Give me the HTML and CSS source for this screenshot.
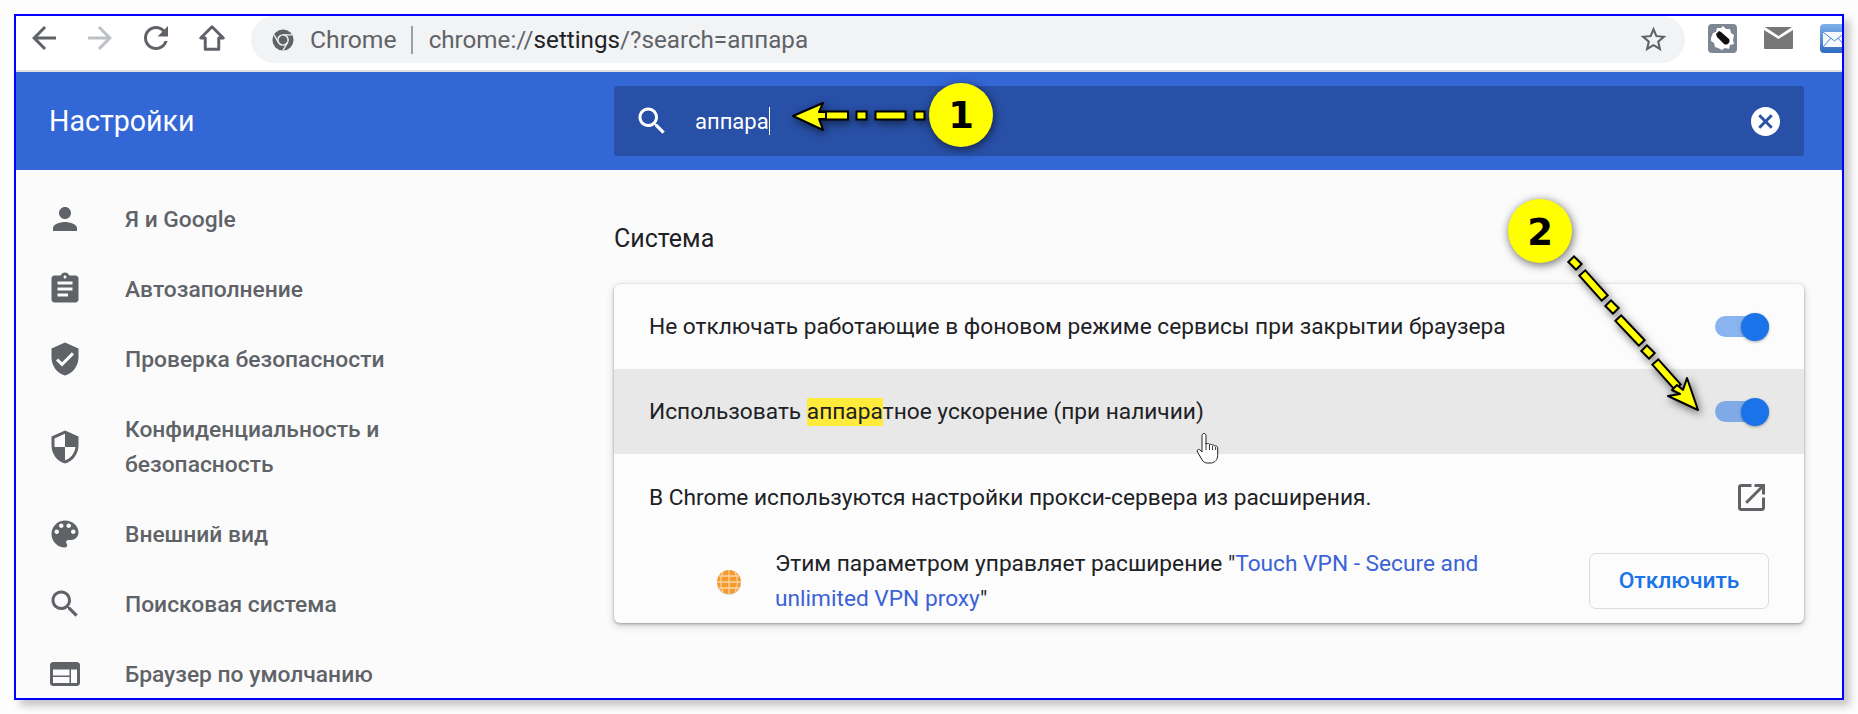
FILE: index.html
```html
<!DOCTYPE html>
<html lang="ru">

<head>
    <meta charset="UTF-8">
    <title>Настройки</title>
    <link rel="stylesheet" href="styles.css">
</head>

<body>
    <div class="frame">
        <!-- browser toolbar -->
        <div class="toolbar">
            <button class="nav-btn"><svg class="ico" viewBox="0 0 24 24"><path d="M20 11H7.83l5.59-5.59L12 4l-8 8 8 8 1.41-1.41L7.83 13H20v-2z"/></svg></button>
            <button class="nav-btn nav-off"><svg class="ico" viewBox="0 0 24 24"><path d="M12 4l-1.41 1.41L16.17 11H4v2h12.17l-5.58 5.59L12 20l8-8z"/></svg></button>
            <button class="nav-btn"><svg class="ico" viewBox="0 0 24 24"><path d="M17.65 6.35C16.2 4.9 14.21 4 12 4c-4.42 0-7.99 3.58-7.99 8s3.57 8 7.99 8c3.73 0 6.84-2.55 7.73-6h-2.08c-.82 2.33-3.04 4-5.65 4-3.31 0-6-2.69-6-6s2.69-6 6-6c1.66 0 3.14.69 4.22 1.78L13 11h7V4l-2.35 2.35z"/></svg></button>
            <button class="nav-btn"><svg class="ico" viewBox="0 0 24 24"><path class="home-line" d="M12 4.500L4.500 12H7.500v7.500h9V12h3z"/></svg></button>
            <div class="omnibox">
                <svg class="chrome-ico" viewBox="0 0 24 24">
                    <circle cx="12" cy="12" r="11.5" fill="#5f6368"/>
                    <circle cx="12" cy="12" r="5.6" fill="#5f6368" stroke="#f1f3f4" stroke-width="1.6"/>
                    <path d="M12 6.4h10M7.2 15l-5-8.6M16.8 15l-5 8.6" stroke="#f1f3f4" stroke-width="1.4"/>
                </svg>
                <span class="site-name">Chrome</span>
                <span class="omni-sep"></span>
                <span class="url">chrome://<b>settings</b>/?search=аппара</span>
                <svg class="ico star" viewBox="0 0 24 24"><path d="M22 9.24l-7.19-.62L12 2 9.19 8.63 2 9.24l5.46 4.73L5.82 21 12 17.27 18.18 21l-1.63-7.03L22 9.24zM12 15.4l-3.76 2.27 1-4.28-3.32-2.88 4.38-.38L12 6.1l1.71 4.04 4.38.38-3.32 2.88 1 4.28L12 15.4z"/></svg>
            </div>
            <svg class="ext ext-bomb" viewBox="0 0 29 29">
                <rect width="29" height="29" rx="4" fill="#7d8793"/>
                <path d="M3 14l2-5 3-1 1-4 4 0 2-2 3 3 4 0 1 4 3 2-1 5 1 4-4 1-1 4-4-1-3 2-4-2-3-1-1-4-3-2z" fill="#fff"/>
                <path d="M8 10l3-3 2 1 8 7c2 3-2 7-5 5l-7-7z" fill="#111"/>
            </svg>
            <svg class="ext ext-mail" viewBox="0 0 29 22">
                <path d="M1 0h27l-13.500 9z" fill="#777"/>
                <path d="M0 3l14.500 9L29 3v18a1 1 0 0 1-1 1H1a1 1 0 0 1-1-1z" fill="#777"/>
            </svg>
            <svg class="ext ext-letter" viewBox="0 0 29 29">
                <defs>
                    <linearGradient id="letterBg" x1="0" y1="0" x2="0" y2="1">
                        <stop offset="0" stop-color="#7fb0ea"/>
                        <stop offset="1" stop-color="#2f6cc0"/>
                    </linearGradient>
                </defs>
                <rect width="29" height="29" rx="4" fill="url(#letterBg)"/>
                <rect x="3" y="8" width="23" height="15" fill="#f4f8fd"/>
                <path d="M3 8l11.500 9L26 8M3 23l8-9M26 23l-8-9" fill="none" stroke="#4a86d2" stroke-width="1"/>
            </svg>
        </div>

        <!-- settings header -->
        <div class="header">
            <div class="title">Настройки</div>
            <div class="search">
                <svg class="search-ico" viewBox="0 0 24 24"><path d="M15.5 14h-.79l-.28-.27C15.41 12.59 16 11.11 16 9.5 16 5.91 13.09 3 9.5 3S3 5.91 3 9.5 5.91 16 9.5 16c1.61 0 3.09-.59 4.23-1.57l.27.28v.79l5 4.99L20.49 19l-4.99-5zm-6 0C7.01 14 5 11.99 5 9.5S7.01 5 9.5 5 14 7.01 14 9.5 11.99 14 9.5 14z"/></svg>
                <span class="search-text">аппара</span>
                <span class="caret"></span>
                <svg class="clear-ico" viewBox="2 2 20 20"><path d="M12 2C6.47 2 2 6.470 2 12s4.470 10 10 10 10-4.470 10-10S17.530 2 12 2zm5 13.590L15.590 17 12 13.410 8.410 17 7 15.590 10.590 12 7 8.410 8.410 7 12 10.590 15.590 7 17 8.410 13.410 12 17 15.590z"/></svg>
            </div>
        </div>

        <div class="content">
            <!-- left menu -->
            <div class="sidebar">
                <div class="menu-item"><svg class="ico" viewBox="0 0 24 24"><path d="M12 12c2.210 0 4-1.790 4-4s-1.790-4-4-4-4 1.790-4 4 1.790 4 4 4zm0 2c-2.670 0-8 1.340-8 4v2h16v-2c0-2.660-5.330-4-8-4z"/></svg><span>Я и Google</span></div>
                <div class="menu-item"><svg class="ico" viewBox="0 0 24 24"><path d="M19 3h-4.180C14.400 1.840 13.300 1 12 1c-1.300 0-2.400.84-2.820 2H5c-1.100 0-2 .9-2 2v14c0 1.100.9 2 2 2h14c1.100 0 2-.9 2-2V5c0-1.100-.9-2-2-2zm-7 0c.55 0 1 .45 1 1s-.45 1-1 1-1-.45-1-1 .45-1 1-1zm2 14H7v-2h7v2zm3-4H7v-2h10v2zm0-4H7V7h10v2z"/></svg><span>Автозаполнение</span></div>
                <div class="menu-item"><svg class="ico" viewBox="0 0 24 24"><path d="M12 1L3 5v6c0 5.550 3.840 10.740 9 12 5.160-1.260 9-6.450 9-12V5l-9-4zm-2 16l-4-4 1.410-1.410L10 14.170l6.590-6.590L18 9l-8 8z"/></svg><span>Проверка безопасности</span></div>
                <div class="menu-item"><svg class="ico" viewBox="0 0 24 24"><path d="M12 1L3 5v6c0 5.550 3.840 10.740 9 12 5.160-1.260 9-6.450 9-12V5l-9-4zm0 10.990h7c-.53 4.120-3.280 7.790-7 8.940V12H5V6.300l7-3.110v8.800z"/></svg><span>Конфиденциальность и безопасность</span></div>
                <div class="menu-item"><svg class="ico" viewBox="0 0 24 24"><path d="M12 3c-4.970 0-9 4.030-9 9s4.030 9 9 9c.83 0 1.500-.67 1.500-1.500 0-.39-.15-.74-.39-1.010-.23-.26-.38-.61-.38-.99 0-.83.67-1.500 1.500-1.500H16c2.760 0 5-2.240 5-5 0-4.420-4.030-8-9-8zm-5.500 9c-.83 0-1.500-.67-1.500-1.500S5.670 9 6.500 9 8 9.670 8 10.500 7.330 12 6.500 12zm3-4C8.670 8 8 7.330 8 6.500S8.670 5 9.500 5s1.500.67 1.500 1.500S10.330 8 9.500 8zm5 0c-.83 0-1.500-.67-1.500-1.500S13.670 5 14.500 5s1.500.67 1.500 1.500S15.330 8 14.500 8zm3 4c-.83 0-1.500-.67-1.500-1.500S16.670 9 17.500 9s1.500.67 1.500 1.500-.67 1.500-1.500 1.500z"/></svg><span>Внешний вид</span></div>
                <div class="menu-item"><svg class="ico" viewBox="0 0 24 24"><path d="M15.500 14h-.79l-.28-.27C15.410 12.590 16 11.110 16 9.500 16 5.910 13.090 3 9.500 3S3 5.910 3 9.500 5.910 16 9.500 16c1.610 0 3.090-.59 4.230-1.570l.27.28v.79l5 4.990L20.490 19l-4.990-5zm-6 0C7.010 14 5 11.990 5 9.500S7.010 5 9.500 5 14 7.010 14 9.500 11.990 14 9.500 14z"/></svg><span>Поисковая система</span></div>
                <div class="menu-item"><svg class="ico" viewBox="0 0 24 24"><path d="M20 4H4c-1.100 0-1.990.9-1.990 2L2 18c0 1.100.9 2 2 2h16c1.100 0 2-.9 2-2V6c0-1.100-.9-2-2-2zm-5 14H4v-4h11v4zm0-5H4V9h11v4zm5 5h-4V9h4v9z"/></svg><span>Браузер по умолчанию</span></div>
            </div>

            <!-- system section -->
            <div class="main">
                <h2 class="section-title">Система</h2>
                <div class="card">
                    <div class="row">
                        <span>Не отключать работающие в фоновом режиме сервисы при закрытии браузера</span>
                        <span class="toggle"></span>
                    </div>
                    <div class="row row-hover">
                        <span>Использовать <mark class="hit">аппара</mark>тное ускорение (при наличии)</span>
                        <span class="toggle"></span>
                    </div>
                    <div class="row row-proxy">
                        <span>В Chrome используются настройки прокси-сервера из расширения.</span>
                        <svg class="ico open-ico" viewBox="3 3 18 18"><path d="M19 19H5V5h7V3H5c-1.110 0-2 .9-2 2v14c0 1.100.89 2 2 2h14c1.100 0 2-.9 2-2v-7h-2v7zM14 3v2h3.590l-9.830 9.830 1.410 1.410L19 6.410V10h2V3h-7z"/></svg>
                    </div>
                    <div class="ext-row">
                        <svg class="globe" viewBox="0 0 28 28">
                            <circle cx="14" cy="15" r="12" fill="#ddd"/>
                            <circle cx="14" cy="14" r="12" fill="#f59a2e"/>
                            <path d="M2 14h24M4 8h20M4 20h20M14 2v24M8 4c-3 6-3 14 0 20M20 4c3 6 3 14 0 20" fill="none" stroke="#fbd6a4" stroke-width="1.300"/>
                        </svg>
                        <p class="ext-text">Этим параметром управляет расширение "<a href="#">Touch VPN - Secure and unlimited VPN proxy</a>"</p>
                        <button class="off-btn">Отключить</button>
                    </div>
                </div>
            </div>
        </div>
    </div>

    <!-- hand drawn marks on top of the screenshot -->
    <svg class="marks" viewBox="0 0 1858 714">
        <g class="arrow">
            <path class="arrow-line" d="M820 115.500H844M860.500 115.500H862.500M879.500 115.500H901.500M918.500 115.500H920.500M1574 262l2 2M1585 276l17 19M1611 306l2 2M1621 321l18 19M1647 351l2 2M1658 365l17 19"/>
            <path class="arrow-fill" d="M820 115.500H844M860.500 115.500H862.500M879.500 115.500H901.500M918.500 115.500H920.500M1574 262l2 2M1585 276l17 19M1611 306l2 2M1621 321l18 19M1647 351l2 2M1658 365l17 19"/>
            <path class="arrow-head" d="M793 116L823 103L819 112H826V119H819L823 130Z"/>
            <path class="arrow-head" d="M1698 410L1687 378L1683 390L1677 385L1672 390L1680 394L1668 396Z"/>
        </g>
    </svg>
    <div class="pin pin-one">1</div>
    <div class="pin pin-two">2</div>
    <svg class="hand" viewBox="0 0 25 32">
        <path d="M8 1.500c1.300 0 2 1 2 2.200V12l1.500-.5c1.200-.2 1.800.4 2 1 1-.6 2.200-.3 2.600.6 1-.5 2.300-.1 2.600 1 1-.4 2.800 0 3 1.500v8c0 3.500-2.500 7-6.500 7.400h-4c-2.500 0-4-1.400-5-3L1.500 20c-1-1.600.6-3.300 2.300-2.300L6 20V3.700C6 2.500 6.800 1.500 8 1.500z" fill="#fff" stroke="#222" stroke-width="1"/>
        <path d="M10 11v7M13.500 12.500V18M16.500 14V18M19.600 15V18" stroke="#222" stroke-width=".9" fill="none"/>
    </svg>
</body>

</html>
```

FILE: styles.css
```css
/* Base */
html,
body {
    margin: 0;
    height: 100%;
    overflow: hidden;
}

body {
    position: relative;
    background-color: #fdfdfd;
    font-family: Roboto, "Liberation Sans", sans-serif;
    color: #202124;
}

.frame {
    margin: 14px;
    width: 1830px;
    height: 686px;
    box-sizing: border-box;
    border: 2px solid #0000ff;
    box-shadow: 6px 6px 8px rgba(0, 0, 0, 0.22);
    background-color: #fbfbfc;
    overflow: hidden;
}

.ico {
    width: 36px;
    height: 36px;
    fill: #5f6368;
    flex-shrink: 0;
}

/* Toolbar */
.toolbar {
    display: flex;
    align-items: flex-start;
    height: 54px;
    background-color: #fff;
    border-bottom: 2px solid #dfe1e5;
    overflow: hidden;
}

.nav-btn {
    width: 56px;
    height: 44px;
    padding: 0;
    border: 0;
    background: none;
    display: flex;
    align-items: center;
    justify-content: center;
    flex-shrink: 0;
}

.nav-off .ico {
    fill: #bdc1c6;
}

.home-line {
    fill: none;
    stroke: #5f6368;
    stroke-width: 2;
    stroke-linejoin: round;
}

.omnibox {
    margin-left: 11px;
    width: 1434px;
    height: 47px;
    border-radius: 24px;
    background-color: #f1f3f4;
    display: flex;
    align-items: center;
    padding: 0 16px 0 21px;
    box-sizing: border-box;
    font-size: 24.2px;
    color: #5f6368;
    flex-shrink: 0;
}

.chrome-ico {
    width: 22px;
    height: 22px;
    margin-right: 16px;
    flex-shrink: 0;
}

.site-name {
    font-size: 24.7px;
}

.omni-sep {
    width: 2px;
    height: 28px;
    margin: 0 16px 0 14px;
    background-color: #9aa0a6;
}

.url b {
    font-weight: 400;
    color: #202124;
}

.star {
    margin-left: auto;
    width: 31px;
    height: 31px;
}

.ext {
    flex-shrink: 0;
}

.ext-bomb {
    margin: 8px 0 0 23px;
    width: 29px;
    height: 29px;
}

.ext-mail {
    margin: 11px 0 0 27px;
    width: 29px;
    height: 22px;
}

.ext-letter {
    margin: 8px 0 0 27px;
    width: 29px;
    height: 29px;
}

/* Header */
.header {
    display: flex;
    align-items: center;
    height: 98px;
    background-color: #3367d6;
}

.title {
    width: 598px;
    padding-left: 33px;
    box-sizing: border-box;
    font-size: 28.6px;
    color: #fff;
}

.search {
    width: 1190px;
    height: 70px;
    border-radius: 3px;
    background-color: #2850a7;
    display: flex;
    align-items: center;
    padding: 0 24px 0 20px;
    box-sizing: border-box;
    color: #fff;
    font-size: 22px;
}

.search-ico {
    width: 36px;
    height: 36px;
    fill: #fff;
    margin-right: 25px;
}

.caret {
    width: 1px;
    height: 28px;
    background-color: #fff;
}

.clear-ico {
    width: 29px;
    height: 29px;
    fill: #fff;
    margin-left: auto;
}

/* Content */
.content {
    display: flex;
}

.sidebar {
    width: 598px;
    padding: 14px 0 0 31px;
    box-sizing: border-box;
    flex-shrink: 0;
}

.menu-item {
    display: flex;
    align-items: center;
    gap: 42px;
    padding: 17.5px 0;
    width: 380px;
    font-size: 22.8px;
    font-weight: 500;
    line-height: 35px;
    color: #5f6368;
}

.menu-item .ico {
    margin: -1px 0;
}

.menu-item span {
    width: 290px;
}

.main {
    width: 1190px;
}

.section-title {
    margin: 55px 0 31px;
    font-size: 25px;
    font-weight: 400;
    line-height: 28px;
}

.card {
    border-radius: 6px;
    background-color: #fcfcfc;
    box-shadow: 0 1px 3px rgba(60, 64, 67, 0.45), 0 3px 8px rgba(60, 64, 67, 0.2);
    font-size: 22.7px;
    overflow: hidden;
}

.row {
    display: flex;
    align-items: center;
    justify-content: space-between;
    height: 85px;
    padding: 0 35px;
}

.row-hover {
    background-color: #e8e8e8;
}

.row-proxy {
    height: 86px;
}

.hit {
    display: inline-block;
    line-height: 28px;
    background-color: #ffeb3b;
    color: inherit;
}

.toggle {
    position: relative;
    width: 54px;
    height: 21px;
    border-radius: 11px;
    background-color: #8ab4f0;
}

.row-hover .toggle {
    background-color: #80aae6;
}

.toggle::after {
    content: "";
    position: absolute;
    top: -3.5px;
    right: 0;
    width: 28px;
    height: 28px;
    border-radius: 50%;
    background-color: #1a73e8;
    box-shadow: 0 1px 3px rgba(0, 0, 0, 0.35);
}

.open-ico {
    width: 27px;
    height: 27px;
    margin-right: 4px;
}

.ext-row {
    display: flex;
    align-items: center;
    height: 83px;
    padding: 0 35px 0 101px;
}

.globe {
    width: 28px;
    height: 28px;
    flex-shrink: 0;
}

.ext-text {
    margin: 0 0 1px 32px;
    width: 720px;
    line-height: 35px;
}

.ext-text a {
    color: #3b62d6;
    text-decoration: none;
}

.off-btn {
    margin: 0 0 2px auto;
    width: 180px;
    height: 56px;
    border: 1px solid #dadce0;
    border-radius: 7px;
    background: none;
    font-family: inherit;
    font-size: 22.8px;
    font-weight: 500;
    color: #1a73e8;
}

/* Hand drawn marks, they lie over the page */
.marks {
    position: absolute;
    left: 0;
    top: 0;
    width: 1858px;
    height: 714px;
}

.arrow {
    filter: drop-shadow(2px 3px 4px rgba(0, 0, 0, 0.55));
}

.arrow-line {
    fill: none;
    stroke: #000;
    stroke-width: 10;
    stroke-linecap: square;
    stroke-linejoin: round;
}

.arrow-fill {
    fill: none;
    stroke: #ffff00;
    stroke-width: 6;
    stroke-linecap: square;
}

.arrow-head {
    fill: #ffff00;
    stroke: #000;
    stroke-width: 2;
    stroke-linejoin: round;
}

.pin {
    position: absolute;
    width: 64px;
    height: 64px;
    border-radius: 50%;
    background-color: #ffff00;
    box-shadow: 1px 2px 10px rgba(0, 0, 0, 0.6);
    display: flex;
    align-items: center;
    justify-content: center;
    font-family: "DejaVu Sans", sans-serif;
    font-size: 37px;
    font-weight: 700;
    color: #000;
}

.pin-one {
    left: 929px;
    top: 83px;
}

.pin-two {
    left: 1508px;
    top: 199px;
    padding-top: 2px;
    box-sizing: content-box;
    height: 62px;
}

.hand {
    position: absolute;
    left: 1196px;
    top: 432px;
    width: 25px;
    height: 32px;
}
```
